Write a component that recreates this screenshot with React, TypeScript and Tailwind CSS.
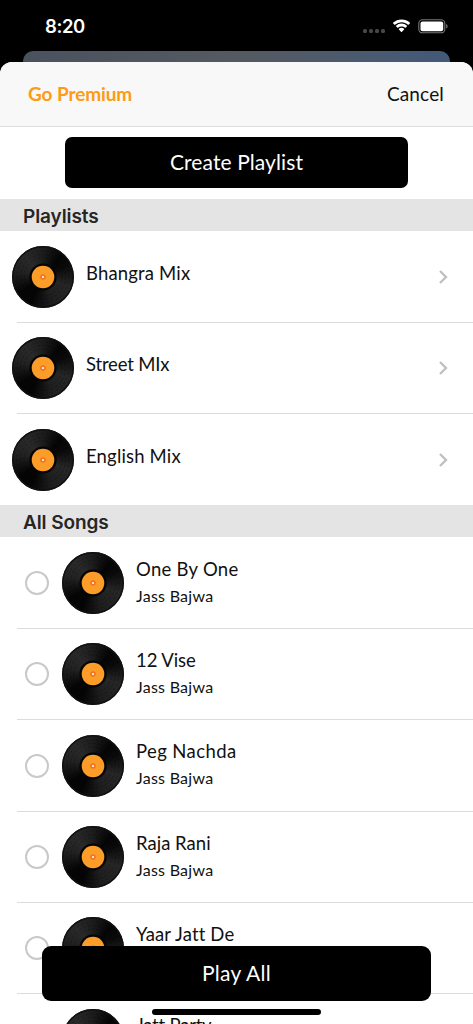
import { useState } from 'react'

interface Song {
  title: string
  artist: string
  tracking: string
}

const playlists = [
  { name: 'Bhangra Mix', tracking: 'tracking-[0.17px]' },
  { name: 'Street MIx', tracking: 'tracking-[-0.17px]' },
  { name: 'English Mix', tracking: 'tracking-[0.17px]' },
]

const songs: Song[] = [
  { title: 'One By One', artist: 'Jass Bajwa', tracking: 'tracking-[0.27px]' },
  { title: '12 Vise', artist: 'Jass Bajwa', tracking: 'tracking-[-0.1px]' },
  { title: 'Peg Nachda', artist: 'Jass Bajwa', tracking: 'tracking-[0.4px]' },
  { title: 'Raja Rani', artist: 'Jass Bajwa', tracking: 'tracking-[0.02px]' },
  { title: 'Yaar Jatt De', artist: 'Jass Bajwa', tracking: 'tracking-[0.14px]' },
  { title: 'Jatt Party', artist: 'Jass Bajwa', tracking: 'tracking-[-0.2px]' },
]

function Vinyl() {
  return (
    <div className="w-[62px] h-[62px] shrink-0 rounded-full bg-[conic-gradient(from_0deg,#1c1c1c,#050505_40deg,#0a0a0a_65deg,#262626_110deg,#1e1e1e_160deg,#050505_205deg,#050505_235deg,#222_285deg,#292929_320deg,#1c1c1c)]">
      <svg viewBox="0 0 62 62" className="w-full h-full" fill="none">
        <circle cx="31" cy="31" r="30.2" stroke="#111" strokeWidth="1.4" />
        <circle cx="31" cy="31" r="26" stroke="#000" strokeOpacity=".35" strokeWidth=".7" strokeDasharray="2 3" />
        <circle cx="31" cy="31" r="22.5" stroke="#000" strokeOpacity=".35" strokeWidth=".7" strokeDasharray="3 2" />
        <circle cx="31" cy="31" r="19" stroke="#000" strokeOpacity=".35" strokeWidth=".7" strokeDasharray="2 2" />
        <circle cx="31" cy="31" r="13.6" fill="#050505" />
        <circle cx="31" cy="31" r="11.3" fill="#fb9d28" />
        <circle cx="31" cy="31" r="2.8" fill="#f4741f" />
        <circle cx="31" cy="31" r="1.1" fill="#fff" />
      </svg>
    </div>
  )
}

function StatusBar() {
  return (
    <div className="h-[51px] shrink-0 flex justify-between pl-[45px] pr-[25px] text-white">
      <span className="mt-[14px] font-['Inter'] text-[18.5px] leading-6 font-semibold tracking-[-0.4px]">8:20</span>
      <div className="mt-[18px] h-4 flex items-center">
        <div className="flex gap-[2px] mt-[9px] mr-[7px]">
          {[0, 1, 2, 3].map(i => (
            <span key={i} className="w-[4px] h-[4px] rounded-[1.5px] bg-[#474747]" />
          ))}
        </div>
        <svg width="19" height="15" viewBox="0 0 19 15" className="mr-[7px]" fill="#fff">
          <path d="M9.5 3.2c2.5 0 4.8 1 6.5 2.6.15.15.35.15.5 0l1.5-1.5a.4.4 0 0 0 0-.6A12.4 12.4 0 0 0 9.5.4C6.3.4 3.3 1.6 1 3.7a.4.4 0 0 0 0 .6l1.5 1.5c.15.15.35.15.5 0A9.3 9.3 0 0 1 9.5 3.2Z" />
          <path d="M9.5 7.4c1.4 0 2.6.5 3.6 1.3.15.15.35.15.5 0l1.4-1.4a.4.4 0 0 0 0-.6 8.1 8.1 0 0 0-11 0 .4.4 0 0 0 0 .6l1.4 1.4c.15.15.35.15.5 0a5.5 5.5 0 0 1 3.6-1.3Z" />
          <path d="M12.1 10.4a.4.4 0 0 0 0-.6 3.9 3.9 0 0 0-5.2 0 .4.4 0 0 0 0 .6L9.2 13c.15.2.45.2.6 0Z" />
        </svg>
        <svg width="30" height="15" viewBox="0 0 30 15" fill="none">
          <rect x=".8" y=".8" width="26" height="13" rx="3.6" stroke="#777" strokeWidth="1.1" />
          <rect x="2.5" y="2.5" width="22.7" height="9.7" rx="2" fill="#fff" />
          <path d="M28.2 5v4.6c.8-.4 1.4-1.2 1.4-2.3S29 5.4 28.2 5Z" fill="#777" />
        </svg>
      </div>
    </div>
  )
}

function SectionHeader({ label }: { label: string }) {
  return (
    <h2 className="h-8 shrink-0 pl-[23px] pt-px bg-[#e4e4e4] font-['Inter'] text-[19px] leading-[33px] font-semibold tracking-[-0.1px] text-[#262626]">
      {label}
    </h2>
  )
}

// Sits on the boundary between two rows
function Divider() {
  return <div className="h-px shrink-0 ml-[17px] -mb-[0.7px] bg-[#dcdcdc]" />
}

export default function App() {
  const [selected, setSelected] = useState<string[]>([])

  const toggle = (title: string) => {
    setSelected(selected.includes(title) ? selected.filter(t => t !== title) : [...selected, title])
  }

  return (
    <div className="relative w-[473px] h-[1024px] overflow-hidden bg-black flex flex-col font-['Lato',sans-serif] text-[#111]">
      <StatusBar />

      {/* Edge of the screen underneath the sheet */}
      <div className="h-[11px] shrink-0 ml-[23px] mr-[23px] rounded-t-[10px] bg-linear-to-r from-[#4a525e] via-[#555a61] via-50% to-[#435979]" />

      <main className="flex-1 min-h-0 overflow-hidden flex flex-col rounded-t-[12px] bg-white">
        <header className="h-[65px] shrink-0 flex items-center justify-between pl-[28px] pr-[29px] bg-[#f8f8f8] border-b border-[#dedede] text-[19px]">
          <button className="font-bold text-[#ff9a13] tracking-[-0.1px]">Go Premium</button>
          <button className="tracking-[0.15px]">Cancel</button>
        </header>

        <div className="h-[72px] shrink-0 flex justify-center pt-[10px]">
          <button className="w-[343px] h-[51px] pb-[2px] rounded-[7px] bg-black text-white text-[21px] tracking-[0.1px]">
            Create Playlist
          </button>
        </div>

        <SectionHeader label="Playlists" />
        {playlists.map((p, i) => (
          <div key={p.name} className="h-[91.35px] shrink-0 flex flex-col">
            <div className="flex-1 flex items-center pl-3 pt-[0.6px] pr-[25px]">
              <Vinyl />
              <span className={`ml-3 mb-[7.6px] flex-1 text-[18.5px] leading-6 ${p.tracking}`}>{p.name}</span>
              <svg width="9" height="14" viewBox="0 0 9 14" fill="none" stroke="#bfbfbf" strokeWidth="2.3">
                <path d="m1 1 6 6-6 6" />
              </svg>
            </div>
            {i < playlists.length - 1 && <Divider />}
          </div>
        ))}

        <SectionHeader label="All Songs" />
        {songs.map(s => (
          <div key={s.title} className="h-[91.35px] shrink-0 flex flex-col">
            <div className="flex-1 flex items-center pl-[25px] pt-[0.6px]">
              <button
                onClick={() => toggle(s.title)}
                className={`w-6 h-6 mr-[13px] rounded-full border-2 border-[#c9c9c9] ${selected.includes(s.title) ? 'bg-[#ff9a13]' : ''}`}
              />
              <Vinyl />
              <div className="ml-3 mb-[1.6px]">
                <div className={`text-[18.5px] leading-[27px] ${s.tracking}`}>{s.title}</div>
                <div className="text-[16px] leading-[26px] tracking-[0.26px]">{s.artist}</div>
              </div>
            </div>
            <Divider />
          </div>
        ))}
      </main>

      <button className="absolute left-[42px] top-[946px] w-[389px] h-[55px] pb-[2px] rounded-[9px] bg-black text-white text-[21px] tracking-[0.3px]">
        Play All
      </button>
      <div className="absolute left-[152px] top-[1009px] w-[169px] h-[6px] rounded-full bg-black" />
    </div>
  )
}
